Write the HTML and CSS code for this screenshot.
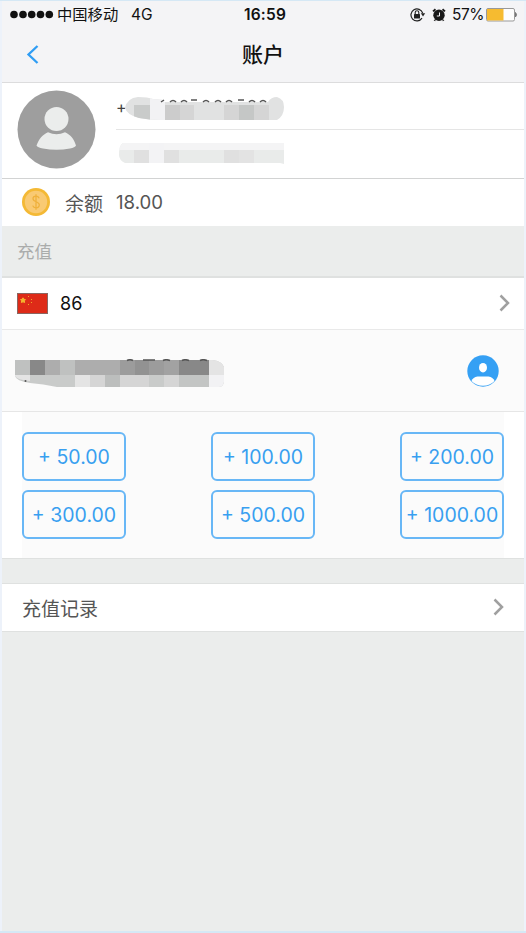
FILE: index.html
```html
<!DOCTYPE html>
<html lang="zh-CN">
<head>
<meta charset="utf-8">
<title>账户</title>
<link rel="stylesheet" href="styles.css">
</head>
<body>
<main class="screen">
  <header class="top">
    <div class="status">
      <svg class="signal" width="44" height="10" viewBox="0 0 44 10"><g fill="#111"><circle cx="4" cy="4.500" r="3.800"/><circle cx="13" cy="4.500" r="3.800"/><circle cx="21.700" cy="4.500" r="3.800"/><circle cx="30.500" cy="4.500" r="3.800"/><circle cx="39.300" cy="4.500" r="3.800"/></g></svg>
      <span class="carrier">中国移动</span>
      <span class="network">4G</span>
      <span class="time">16:59</span>
      <svg class="lock" width="16" height="14" viewBox="0 0 16 14"><path d="M12.700 5.200A6 6 0 1 0 12 10.200" fill="none" stroke="#222" stroke-width="1.200"/><path d="M10.800 5.300h4.400L13 8.500z" fill="#222"/><rect x="4" y="6" width="6" height="4.500" rx=".5" fill="#222"/><path d="M5.200 6V4.600a1.800 1.800 0 0 1 3.600 0V6" fill="none" stroke="#222" stroke-width="1.100"/></svg>
      <svg class="alarm" width="14" height="14" viewBox="0 0 14 14"><circle cx="7" cy="7.300" r="5.700" fill="#181818"/><path d="M1 3.400L3.500 1.200M13 3.400L10.500 1.200M3 12l-.6.800M11 12l.6.800" stroke="#181818" stroke-width="1.800"/><path d="M7.500 4.500v3.500H4.800" fill="none" stroke="#f4f4f6" stroke-width="1"/></svg>
      <span class="percent">57%</span>
      <svg class="battery" width="32" height="14" viewBox="0 0 32 14"><rect x=".5" y=".5" width="28" height="12.500" rx="1.500" fill="#fdfdfd" stroke="#999"/><path d="M1 1h16.500v11.500H1z" fill="#f6bb30"/><path d="M29.500 4.500q2 2.200 0 4.500z" fill="#777" stroke="#777"/></svg>
    </div>
    <div class="nav">
      <svg class="back" width="14" height="22" viewBox="0 0 14 22"><path d="M12.500 2L3.500 10.500l9 8.500" fill="none" stroke="#2f9df4" stroke-width="2.300"/></svg>
      <h1>账户</h1>
    </div>
  </header>

  <section class="profile">
    <svg class="avatar" width="79" height="79" viewBox="0 0 79 79"><circle cx="39.500" cy="39.500" r="39" fill="#9e9e9e"/><circle cx="39.500" cy="29" r="12" fill="#ebedec"/><path d="M19.500 55.500C22 49 25.500 44.500 31 42.200q8.500 4 17 0C53.500 44.500 57 49 59 55.500q-1 2-6 3.100-13.500 2.400-27 0-5.500-1.100-6.500-3.100z" fill="#ebedec"/></svg>
    <div class="fields">
      <div class="field first">
        <span class="plus">+</span>
        <svg class="mask" width="160" height="24" viewBox="0 0 160 24">
          <defs><clipPath id="pill"><path d="M0 11Q2 1 13 0q10 0 15 2l11 1v2h104q3-5 9-5 7 2 7 10 0 9-7 13H36q-12 0-22-2Q2 18 0 11z"/></clipPath></defs>
          <g clip-path="url(#pill)"><path fill="#e1e2e2" d="M0 0h160v24H0z"/><path fill="#c9cbca" d="M9 8h16v15H9z"/><path fill="#f2f2f4" d="M25 0h15v24H25z"/><path fill="#ccc" d="M40 8h15v16H40z"/><path fill="#d5d5d5" d="M55 8h14v16H55zM99 8h15v16H99zM129 8h15v16h-15z"/><path fill="#c5c7c6" d="M114 8h15v16h-15z"/></g>
          <path d="M36 5l3-2M45 5q3-3 6 0M56 5q3-3 6 0M66 3h6M78 5q3-3 6 0M90 5q3-3 6 0M101 5q3-3 6 0M113 3h6M124 5q3-3 6 0M135 5q3-3 6 0" fill="none" stroke="#555" stroke-width="1.500"/>
        </svg>
      </div>
      <div class="field">
        <svg class="mask second" width="166" height="21" viewBox="0 0 166 21"><path d="M4 0h161v21l-4-1H6q-6-3-6-8Q0 2 4 0z" fill="#e9ebea"/><path d="M4 0h161v7H0q1-5 4-7z" fill="#f4f4f5"/><path fill="#e0e0e0" d="M15 7h15v13H15zM45 7h15v13H45zM105 7h15v13h-15z"/><path fill="#f3f3f5" d="M30 0h15v20H30z"/><path fill="#e3e3e3" d="M120 7h15v13h-15z"/></svg>
      </div>
    </div>
  </section>

  <section class="balance">
    <svg width="29" height="29" viewBox="0 0 29 29"><circle cx="14" cy="14" r="14" fill="#f4b935"/><circle cx="14" cy="14" r="11.200" fill="#f9ca73"/><path d="M17.200 10.200q-1-2-3.200-2-3 0-3 2.600c0 3.300 6.300 2.600 6.300 6 0 2-1.300 3-3.300 3q-2.500 0-3.300-2.200M14 6.200v15.600" fill="none" stroke="#efb13c" stroke-width="1.300"/></svg>
    <span class="label">余额</span><span class="amount">18.00</span>
  </section>

  <h2 class="group">充值</h2>

  <section class="country">
    <svg width="31" height="21" viewBox="0 0 31 21"><rect x=".5" y=".5" width="30" height="20" fill="#de2b18" stroke="#8b6560"/><path d="M6 4.800l.9 1.500 1.600.3-1.100 1.200.2 1.700L6 8.800l-1.600.7.200-1.700-1.100-1.200 1.600-.3z" fill="#f5b52e" stroke="#f5b52e"/><path fill="#f0a62a" d="M11 3h1v1h-1zM14 6h1v1h-1zM14 9h1v1h-1zM11 11h1v1h-1z"/></svg>
    <span>86</span>
    <svg class="chevron" width="12" height="18" viewBox="0 0 12 18"><path d="M1.500 1.500L9 9l-7.500 7.500" fill="none" stroke="#a0a0a0" stroke-width="2.500"/></svg>
  </section>

  <section class="phone">
    <svg class="number-mask" width="210" height="30" viewBox="0 0 210 30">
      <path d="M0 1h197q10 1 12 7v15q-1 5-5 5H42Q28 25 15 24 1 22 0 17z" fill="#c9cbca"/>
      <path fill="#bfc1c0" d="M0 1h15v15H0zM45 1h15v15H45z"/><path fill="#888" d="M15 1h15v15H15z"/><path fill="#adadad" d="M30 1h15v15H30zM60 1h45v15H60z"/><path fill="#9c9c9c" d="M105 1h15v15h-15zM134 1h15v15h-15z"/><path fill="#929292" d="M120 1h14v15h-14z"/><path fill="#a2a2a2" d="M149 1h15v15h-15z"/><path fill="#888" d="M164 1h30v15h-30z"/><path fill="#e4e4e4" d="M194 1h3q10 1 12 7v8h-15zM60 16h15v12H60z"/><path fill="#d5d5d5" d="M75 16h15v12H75zM105 16h29v12h-29zM149 16h15v12h-15z"/><path fill="#bcbebd" d="M90 16h15v12H90z"/><path fill="#c3c5c4" d="M164 16h30v12h-30z"/><path fill="#f2f2f4" d="M194 16h15v7q-1 5-5 5h-10z"/><path fill="#e4e4e4" d="M0 16h15v6Q2 21 0 17z"/>
      <path d="M112 1.500q3-1.500 6 0M128 1h12M148 1.500q3-1.500 7 0M167 1.500q3-1.500 7 0M185 1.500q3-1.500 7 0" fill="none" stroke="#555" stroke-width="1.600"/><circle cx="10.500" cy="22" r="1" fill="#555"/>
    </svg>
    <svg class="contact" width="32" height="32" viewBox="0 0 32 32"><circle cx="16" cy="16" r="15.700" fill="#35a0f4"/><ellipse cx="16" cy="12.700" rx="4" ry="4.800" fill="#fff"/><path d="M4.500 26q1.500-4 6-4.500h11q4.500.5 6 4.500-4.500 4.800-11.500 4.800T4.500 26z" fill="#fff"/></svg>
  </section>

  <section class="amounts">
    <div class="grid">
      <button>+ 50.00</button><button>+ 100.00</button><button>+ 200.00</button>
      <button>+ 300.00</button><button>+ 500.00</button><button>+ 1000.00</button>
    </div>
  </section>

  <section class="records">
    <span>充值记录</span>
    <svg class="chevron" width="12" height="18" viewBox="0 0 12 18"><path d="M1.500 1.500L9 9l-7.500 7.500" fill="none" stroke="#a0a0a0" stroke-width="2.500"/></svg>
  </section>
</main>
</body>
</html>
```
FILE: styles.css
```css
* { box-sizing: border-box; }
body {
  margin: 0;
  font-family: Inter, "Noto Sans CJK SC", sans-serif;
  color: #111;
}
svg { display: block; flex: none; }
.screen {
  height: 933px;
  border: solid #d5e8f5;
  border-width: 1px 0 2px;
  background: #ebedec;
  box-shadow: inset 2px 0 #edf2fa, inset -2px 0 #edf2fa;
  padding: 0 2px;
}
.top {
  height: 82px;
  background: #f4f4f6;
  border-bottom: 1px solid #dcdcdd;
}
.status {
  height: 27px;
  display: flex;
  align-items: center;
  font-size: 15.5px;
  line-height: 20px;
  padding-left: 8px;
  white-space: nowrap;
}
.carrier { width: 62px; margin-left: 3px; font-size: 15.3px; }
.network { width: 24px; margin-left: 12px; }
.time { width: 46px; margin-left: 89px; font-weight: 600; letter-spacing: .2px; }
.lock { margin-left: 120px; }
.alarm { margin-left: 6px; }
.percent { width: 31px; margin-left: 6px; letter-spacing: -.5px; }
.battery { margin-left: 3px; }
.nav {
  height: 54px;
  display: grid;
  grid-template-columns: 60px 1fr 60px;
  align-items: center;
}
.back { margin-left: 23px; }
h1 {
  margin: 0;
  font-size: 21px;
  line-height: 30px;
  font-weight: 500;
  text-align: center;
}
.profile {
  height: 96px;
  display: flex;
  background: #fff;
  border-bottom: 1px solid #d2d3d3;
}
.avatar { margin: 7px 20px 0 15px; }
.fields { flex: 1; }
.field { height: 48px; display: flex; align-items: flex-start; }
.field.first { height: 47px; border-bottom: 1px solid #e5e5e5; }
.plus { width: 9px; margin-top: 12px; font-size: 16px; line-height: 24px; color: #444; }
.mask { margin-top: 14px; }
.mask.second { margin: 13px 0 0 3px; }
.balance {
  height: 47px;
  display: flex;
  align-items: center;
  padding: 0 0 1px 20px;
  background: #fff;
  font-size: 19px;
  color: #555;
}
.label { margin-left: 14px; width: 51px; }
.amount { font-size: 18.6px; }
.group {
  height: 52px;
  margin: 0;
  padding-left: 15px;
  border-bottom: 2px solid #dfe1e0;
  font-size: 17.5px;
  font-weight: 400;
  line-height: 51px;
  color: #aaacab;
}
.country {
  height: 52px;
  display: flex;
  align-items: center;
  padding: 0 13px 1px 15px;
  background: #fff;
  border-bottom: 1px solid #e9e9e9;
  font-size: 18px;
}
.country span { margin-left: 12px; }
.chevron { margin-left: auto; }
.phone {
  height: 82px;
  display: flex;
  align-items: center;
  justify-content: space-between;
  padding: 1px 25px 0 13px;
  background: #fbfbfb;
  border-bottom: 1px solid #e6e6e6;
}
.number-mask { margin-top: 5px; }
.amounts {
  height: 147px;
  padding: 0 20px;
  background: #fff;
  border-bottom: 1px solid #dfe1e0;
}
.grid {
  height: 146px;
  padding-top: 20px;
  display: grid;
  grid-template-columns: repeat(3, 104px);
  grid-auto-rows: 49px;
  justify-content: space-between;
  align-content: start;
  row-gap: 9px;
  background: #fbfbfb;
}
button {
  padding: 0;
  border: 2px solid #68b7f6;
  border-radius: 6px;
  background: transparent;
  font: 400 19.5px/24px Inter, sans-serif;
  color: #389ff0;
  white-space: nowrap;
}
.records {
  height: 49px;
  margin-top: 24px;
  display: flex;
  align-items: center;
  padding: 0 19px 1px 20px;
  background: #fff;
  border: solid #dfe1e0;
  border-width: 1px 0;
  font-size: 19px;
  color: #555;
}
```
